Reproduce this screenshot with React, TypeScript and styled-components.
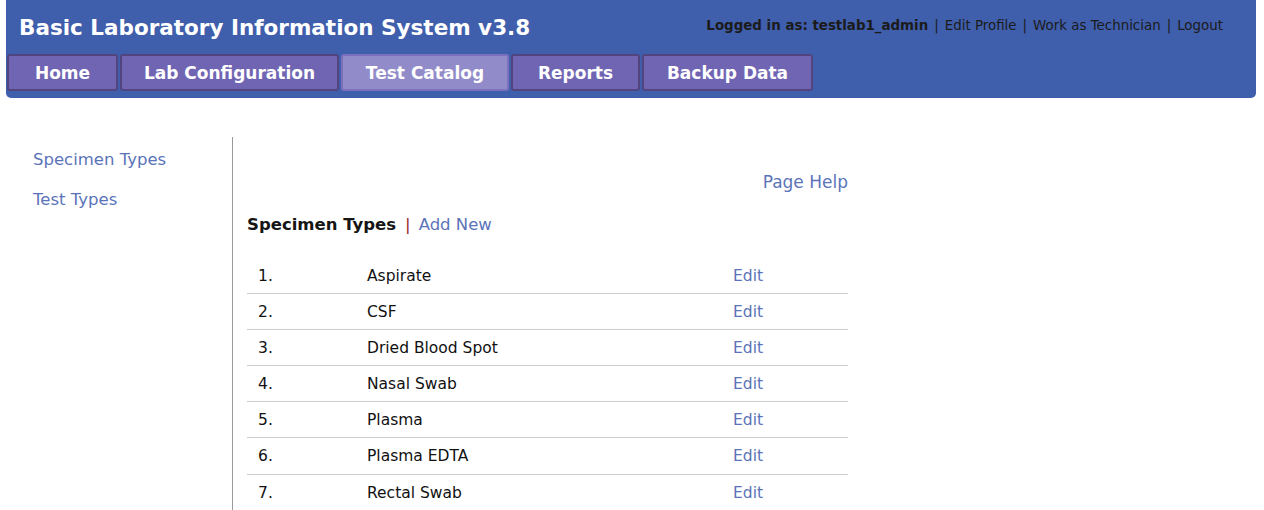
import React from "react";
import styled, { createGlobalStyle } from "styled-components";

const GlobalStyle = createGlobalStyle`
  html, body { margin: 0; padding: 0; background: #ffffff; }
  body { font-family: "DejaVu Sans", "Liberation Sans", sans-serif; color: #111; }
  * { box-sizing: border-box; }
`;

const Page = styled.div`
  width: 1264px;
  height: 510px;
  overflow: hidden;
  padding: 0 8px 0 6px;
`;

const Header = styled.header`
  background: #3f5eac;
  border-radius: 0 0 5px 5px;
  height: 98px;
  display: flex;
  flex-direction: column;
  padding: 0 1px;
`;

const TopRow = styled.div`
  display: flex;
  justify-content: space-between;
  align-items: center;
  height: 54px;
  padding: 0 32px 0 12px;
`;

const Title = styled.h1`
  margin: 0;
  color: #fff;
  font-size: 21.5px;
  font-weight: bold;
`;

const UserBar = styled.div`
  font-size: 13.4px;
  color: #1b1b1b;
  display: flex;
  gap: 6px;
  margin-top: -3px;
`;

const Strong = styled.span`
  font-weight: bold;
`;

const Nav = styled.nav`
  display: flex;
  gap: 2px;
`;

const NavButton = styled.div<{ $active?: boolean; $w: number }>`
  width: ${(p) => p.$w}px;
  height: 37px;
  display: flex;
  align-items: center;
  justify-content: center;
  font-size: 17px;
  font-weight: bold;
  color: #fff;
  border: 2px solid ${(p) => (p.$active ? "#7a70bd" : "#51447f")};
  border-radius: 3px;
  background: ${(p) => (p.$active ? "#928bc9" : "#7065b3")};
`;

const Body = styled.div`
  display: flex;
  margin-top: 39px;
`;

const Sidebar = styled.aside`
  width: 227px;
  border-right: 1px solid #999;
  padding: 13px 0 0 27px;
  display: flex;
  flex-direction: column;
  gap: 21px;
  height: 380px;
`;

const SideLink = styled.a`
  color: #5b74b9;
  font-size: 16.5px;
  font-weight: normal;
  text-decoration: none;
`;

const Content = styled.main`
  width: 601px;
  margin-left: 14px;
  display: flex;
  flex-direction: column;
`;

const HelpLink = styled.a`
  align-self: flex-end;
  color: #5b74b9;
  font-size: 17px;
  margin-top: 35px;
  text-decoration: none;
`;

const Heading = styled.div`
  margin-top: 23px;
  font-size: 16.5px;
  display: flex;
  align-items: center;
`;

const HeadTitle = styled.span`
  font-weight: bold;
  color: #151515;
`;

const Sep = styled.span`
  color: #9a2a2a;
  margin: 0 8px 0 9px;
`;

const Link = styled.a`
  color: #5b74b9;
  text-decoration: none;
`;

const Table = styled.div`
  margin-top: 24px;
  display: flex;
  flex-direction: column;
`;

const Row = styled.div<{ $last?: boolean }>`
  display: grid;
  grid-template-columns: 109px 366px 1fr;
  height: 36.1px;
  align-items: center;
  font-size: 15.5px;
  border-bottom: ${(p) => (p.$last ? "none" : "1px solid #cccccc")};
`;

const Cell = styled.span`
  padding-left: 11px;
  color: #111;
`;

const EditCell = styled(Link)`
  padding-left: 11px;
`;

const tabs = [
  { label: "Home", w: 111 },
  { label: "Lab Configuration", w: 219 },
  { label: "Test Catalog", w: 168, active: true },
  { label: "Reports", w: 129 },
  { label: "Backup Data", w: 171 },
];

const specimens = [
  "Aspirate",
  "CSF",
  "Dried Blood Spot",
  "Nasal Swab",
  "Plasma",
  "Plasma EDTA",
  "Rectal Swab",
];

export default function App() {
  return (
    <>
      <GlobalStyle />
      <Page>
        <Header>
          <TopRow>
            <Title>Basic Laboratory Information System v3.8</Title>
            <UserBar>
              <Strong>Logged in as: testlab1_admin</Strong>
              <span>|</span>
              <span>Edit Profile</span>
              <span>|</span>
              <span>Work as Technician</span>
              <span>|</span>
              <span>Logout</span>
            </UserBar>
          </TopRow>
          <Nav>
            {tabs.map((t) => (
              <NavButton key={t.label} $w={t.w} $active={t.active}>
                {t.label}
              </NavButton>
            ))}
          </Nav>
        </Header>
        <Body>
          <Sidebar>
            <SideLink href="#">Specimen Types</SideLink>
            <SideLink href="#">Test Types</SideLink>
          </Sidebar>
          <Content>
            <HelpLink href="#">Page Help</HelpLink>
            <Heading>
              <HeadTitle>Specimen Types</HeadTitle>
              <Sep>|</Sep>
              <Link href="#">Add New</Link>
            </Heading>
            <Table>
              {specimens.map((s, i) => (
                <Row key={s} $last={i === specimens.length - 1}>
                  <Cell>{i + 1}.</Cell>
                  <Cell>{s}</Cell>
                  <EditCell href="#">Edit</EditCell>
                </Row>
              ))}
            </Table>
          </Content>
        </Body>
      </Page>
    </>
  );
}
